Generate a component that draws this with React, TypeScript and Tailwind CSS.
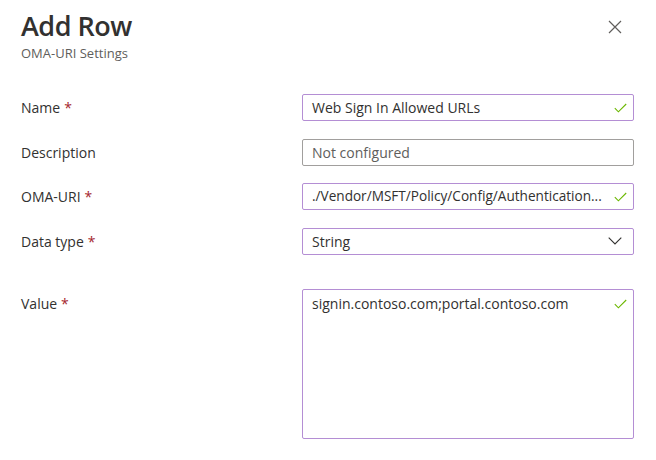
import React from 'react';

function Check() {
  return (
    <svg width="13" height="10" viewBox="0 0 13 10" className="shrink-0">
      <path d="M0.8 5.2 L4.4 8.8 L12.2 1" fill="none" stroke="#6bb700" strokeWidth="1.1" />
    </svg>
  );
}

function Chevron() {
  return (
    <svg width="14" height="8" viewBox="0 0 14 8" className="shrink-0">
      <path d="M0.7 0.7 L7 7 L13.3 0.7" fill="none" stroke="#323130" strokeWidth="1.1" />
    </svg>
  );
}

function Label({ text, required }: { text: string; required?: boolean }) {
  return (
    <div className="text-[14px] text-[#323130]">
      {text}
      {required && <span className="ml-[4px] text-[#a4262c]">*</span>}
    </div>
  );
}

export default function App() {
  return (
    <div
      className="w-[656px] h-[460px] bg-white overflow-hidden"
      style={{ fontFamily: '"Open Sans", "Noto Sans", sans-serif' }}
    >
      <div className="flex justify-between pl-[21px] pr-[34px] pt-[8px]">
        <div>
          <h1 className="text-[27px] leading-[36px] font-semibold text-[#323130] tracking-[-0.5px]">Add Row</h1>
          <div className="text-[13px] leading-[16px] text-[#605e5c] mt-[1px]">OMA-URI Settings</div>
        </div>
        <svg width="14" height="14" viewBox="0 0 14 14" className="mt-[12px]">
          <path d="M1 1 L13 13 M13 1 L1 13" stroke="#605e5c" strokeWidth="1.2" />
        </svg>
      </div>

      <div className="flex flex-col gap-[17.5px] pl-[21px] pr-[22px] mt-[33px]">
        <div className="flex items-center justify-between">
          <Label text="Name" required />
          <div className="w-[332px] h-[27px] border border-[#b48ed4] rounded-[2px] flex items-center justify-between pl-[9px] pr-[6px] text-[14px] text-[#323130]">
            <span>Web Sign In Allowed URLs</span>
            <Check />
          </div>
        </div>
        <div className="flex items-center justify-between">
          <Label text="Description" />
          <div className="w-[332px] h-[27px] border border-[#a19f9d] rounded-[2px] flex items-center pl-[9px] text-[14px] text-[#605e5c]">
            Not configured
          </div>
        </div>
        <div className="flex items-center justify-between">
          <Label text="OMA-URI" required />
          <div className="w-[332px] h-[27px] border border-[#b48ed4] rounded-[2px] flex items-center justify-between pl-[9px] pr-[6px] text-[14px] text-[#323130]">
            <span className="whitespace-nowrap text-[13.6px]">./Vendor/MSFT/Policy/Config/Authentication...</span>
            <Check />
          </div>
        </div>
        <div className="flex items-center justify-between">
          <Label text="Data type" required />
          <div className="w-[332px] h-[27px] border border-[#b48ed4] rounded-[2px] flex items-center justify-between pl-[9px] pr-[11px] text-[14px] text-[#323130]">
            <span>String</span>
            <Chevron />
          </div>
        </div>
        <div className="flex items-start justify-between mt-[17px]">
          <div className="pt-[4px]">
            <Label text="Value" required />
          </div>
          <div className="w-[332px] h-[150px] border border-[#b48ed4] rounded-[2px] flex items-start justify-between pl-[9px] pr-[6px] pt-[3px] text-[14px] text-[#323130]">
            <span>signin.contoso.com;portal.contoso.com</span>
            <div className="pt-[6px]">
              <Check />
            </div>
          </div>
        </div>
      </div>
    </div>
  );
}
